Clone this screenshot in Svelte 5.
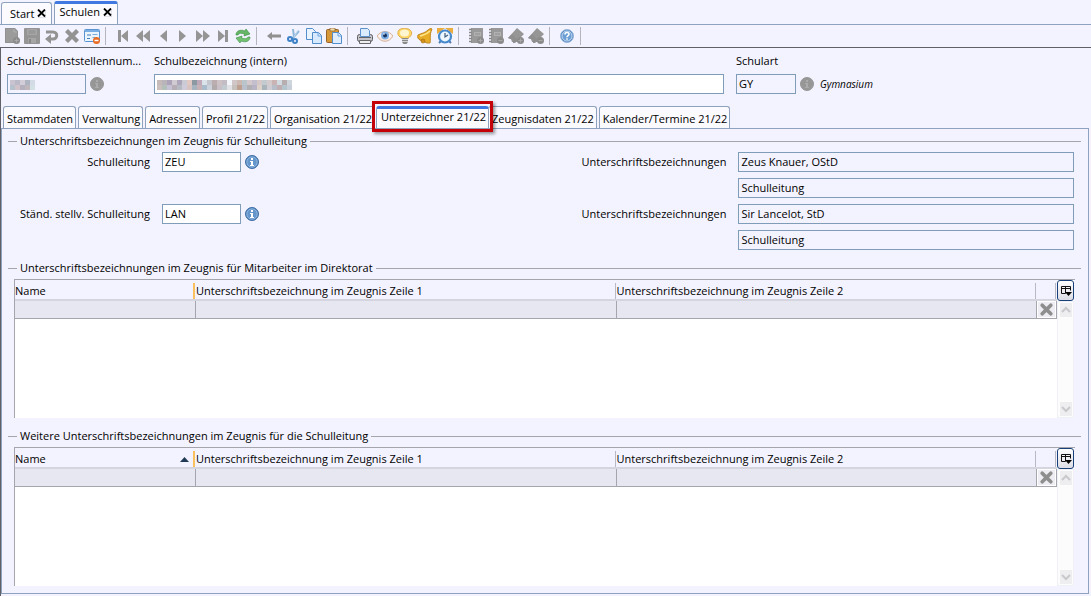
<script lang="ts">
	type Tool = { name: string; off?: boolean };

	const toolbar: Tool[][] = [
		[
			{ name: 'Neu', off: true },
			{ name: 'Speichern', off: true },
			{ name: 'Rückgängig', off: true },
			{ name: 'Löschen', off: true },
			{ name: 'Maske leeren' }
		],
		[
			{ name: 'Erster', off: true },
			{ name: 'Seite zurück', off: true },
			{ name: 'Zurück', off: true },
			{ name: 'Weiter', off: true },
			{ name: 'Seite weiter', off: true },
			{ name: 'Letzter', off: true },
			{ name: 'Aktualisieren' }
		],
		[
			{ name: 'Vorheriges', off: true },
			{ name: 'Ausschneiden' },
			{ name: 'Kopieren' },
			{ name: 'Einfügen' }
		],
		[
			{ name: 'Drucken' },
			{ name: 'Ansicht' },
			{ name: 'Hinweis' },
			{ name: 'Benachrichtigung' },
			{ name: 'Wiedervorlage' }
		],
		[
			{ name: 'Liste hinzufügen', off: true },
			{ name: 'Liste entfernen', off: true },
			{ name: 'Marke hinzufügen', off: true },
			{ name: 'Marke entfernen', off: true }
		],
		[{ name: 'Hilfe' }]
	];

	const plus = '<circle cx="12.5" cy="12.5" r="3.5" fill="#8b8b8b"/><path d="M10.5 12.5h4M12.5 10.5v4" stroke="#aaa"/>';
	const minus = '<circle cx="12.5" cy="12.5" r="3.5" fill="#8b8b8b"/><path d="M10.5 12.5h4" stroke="#aaa"/>';
	const book = '<path d="M3 0h12v15H3z" fill="#999"/><path d="M1 1.5h3M1 4.5h3M1 7.5h3M1 10.5h3M1 13.5h3" stroke="#888" stroke-width="1.5"/><path d="M6 4h7v4H6z" fill="#b0b0b0"/><path d="M7 6h5" stroke="#909090"/>';
	const tag = '<path d="M9 0l7 6-3 3v5H4l-1-3-3-1z" fill="#969696"/><path d="M0 10l4-4 6 6-3 3H5v-3z" fill="#8f8f8f"/>';

	const icons: Record<string, string> = {
		'Neu': '<path d="M1 0h10l3 3v12H1z" fill="#9b9b9b"/><path d="M1.5.5h9l3 3v11h-12z" fill="none" stroke="#919191"/><path d="M10 1v3h3" fill="none" stroke="#b0b0b0"/>' + plus,
		'Speichern': '<rect width="16" height="16" rx="1" fill="#959595"/><path d="M3 1h10v6H3z" fill="#a6a6a6"/><path d="M4.5 3h7M4.5 5h7" stroke="#8c8c8c"/><path d="M4 10h8v5H4z" fill="#a6a6a6"/><path d="M5 11h2v4H5z" fill="#888"/>',
		'Rückgängig': '<path d="M2 4h7c5 0 5 7 0 7H6" fill="none" stroke="#939393" stroke-width="3"/><path d="M7 6v10l-6-5z" fill="#939393"/>',
		'Löschen': '<path d="M1 4l3-3 4 4 4-4 3 3-4 4 4 4-3 3-4-4-4 4-3-3 4-4z" fill="#929292"/>',
		'Maske leeren': '<rect x=".5" y="1.5" width="15" height="12" rx="1" fill="#eaf4ff" stroke="#5a94d0"/><path d="M1 2h14v2H1z" fill="#78aee4"/><path d="M3 7h4M3 10.5h3" stroke="#417fbd"/><path d="M8.5 6.5h5M8.5 9.5h3" stroke="#7aabda"/><circle cx="12.5" cy="12.5" r="3.5" fill="#e96b22"/><path d="M10.5 12.5h4" stroke="#fff" stroke-width="1.5"/>',
		'Erster': '<path d="M3 2h3v12H3zM13 2v12L6 8z" fill="#959595"/>',
		'Seite zurück': '<path d="M8 2v12L1 8zM15 2v12L8 8z" fill="#959595"/>',
		'Zurück': '<path d="M12 2v12L5 8z" fill="#959595"/>',
		'Weiter': '<path d="M4 2v12l7-6z" fill="#959595"/>',
		'Seite weiter': '<path d="M1 2v12l7-6zM8 2v12l7-6z" fill="#959595"/>',
		'Letzter': '<path d="M3 2v12l7-6zM10 2h3v12h-3z" fill="#959595"/>',
		'Aktualisieren': '<path d="M1 7c0-4 4-6 9-4l1-2 4 5-6 2 .5-2C6 5 4 5 3 7z" fill="#65b665" stroke="#398b42" stroke-width=".6"/><path d="M15 9c0 4-4 6-9 4l-1 2-4-5 6-2-.5 2c3.5 1 5.5 1 6.5-1z" fill="#72c272" stroke="#398b42" stroke-width=".6"/>',
		'Vorheriges': '<path d="M1 8l5-4v2.5h9v3H6V12z" fill="#909090"/>',
		'Ausschneiden': '<path d="M7 1l1 8M13 3L6 11" stroke="#8db6da" stroke-width="2" fill="none"/><path d="M12 2L8 9" stroke="#c8dbed"/><circle cx="4" cy="11" r="2" fill="none" stroke="#3d82c8" stroke-width="2"/><circle cx="9" cy="13" r="2" fill="none" stroke="#3d82c8" stroke-width="2"/>',
		'Kopieren': '<path d="M.5.5h6l3 3v8h-9z" fill="#eaf4ff" stroke="#528dcc"/><path d="M6.5 4.5h6l3 3v8h-9z" fill="#d8eaff" stroke="#528dcc"/><path d="M12 5v3h3" fill="none" stroke="#6ba3df"/>',
		'Einfügen': '<rect x=".5" y="1.5" width="12" height="13" rx="1" fill="#d79839" stroke="#976328"/><path d="M4 0h5v3H4z" fill="#f0dcaa" stroke="#8b602b" stroke-width=".7"/><path d="M6.5 4.5h6l3 3v8h-9z" fill="#dfedff" stroke="#528dcc"/><path d="M12 5v3h3" fill="none" stroke="#6ba3df"/>',
		'Drucken': '<rect x=".5" y="6.5" width="15" height="7" rx="2" fill="#c6c6ca" stroke="#5d5d63"/><path d="M3.5.5h7l2 2v6h-9z" fill="#dcecff" stroke="#5c91cd"/><path d="M2 9.5h12" stroke="#666"/><path d="M2.5 12.5h11v3h-11z" fill="#eee" stroke="#66666c"/>',
		'Ansicht': '<path d="M0 8c4-6 12-6 16 0-4 7-12 7-16 0z" fill="#fbe9de" stroke="#d4b39e"/><path d="M2 8c3-4 9-4 12 0-3 4-9 4-12 0z" fill="#fff"/><circle cx="8" cy="7.5" r="4" fill="#7faee4"/><circle cx="8" cy="7.5" r="2" fill="#17325e"/><circle cx="7" cy="6" r=".8" fill="#fff"/>',
		'Hinweis': '<path d="M5 10C-1 8 0 1 5 .7h5c6 1 6 7 1 9.300v1H5z" fill="#ffd768" stroke="#e2ab45"/><ellipse cx="7.5" cy="5" rx="4.500" ry="3.500" fill="#fff6cf"/><path d="M5 10h6v4l-1.500 2h-3L5 14z" fill="#898989"/><path d="M5 11.500h6M5 13.500h6" stroke="#d3d3d3"/>',
		'Benachrichtigung': '<path d="M15 1c-1-1-3 0-4 1-3 3-6 3-10 5-1 2 0 4 2 5l7 3h3c1-3-1-8 2-14z" fill="#e8ad28" stroke="#c08620"/><path d="M13 3C9 7 6 7 3 8" stroke="#ffe58c" fill="none" stroke-width="1.5"/><circle cx="6" cy="13" r="2" fill="#d4901a" stroke="#a06b10" stroke-width=".6"/>',
		'Wiedervorlage': '<path d="M1 4V1h4zM15 4V1h-4z" fill="#f2c75c" stroke="#e9ac3d" stroke-width="2"/><path d="M4 13l-2 2M12 13l2 2" stroke="#4e7aad" stroke-width="2"/><circle cx="8" cy="8.5" r="6" fill="#eef6ff" stroke="#4689cd" stroke-width="2.2"/><path d="M8 5v4l3-2" fill="none" stroke="#405c79" stroke-width="1.2"/>',
		'Liste hinzufügen': book + plus,
		'Liste entfernen': book + minus,
		'Marke hinzufügen': tag + plus,
		'Marke entfernen': tag + minus
	};

	const tabs = [
		'Stammdaten',
		'Verwaltung',
		'Adressen',
		'Profil 21/22',
		'Organisation 21/22',
		'Unterzeichner 21/22',
		'Zeugnisdaten 21/22',
		'Kalender/Termine 21/22'
	];
	let active = $state('Unterzeichner 21/22');

	const signers = [
		{ id: 'leitung', label: 'Schulleitung', code: 'ZEU', line1: 'Zeus Knauer, OStD', line2: 'Schulleitung' },
		{ id: 'stellv', label: 'Ständ. stellv. Schulleitung', code: 'LAN', line1: 'Sir Lancelot, StD', line2: 'Schulleitung' }
	];

	const lists = [
		{ title: 'Unterschriftsbezeichnungen im Zeugnis für Mitarbeiter im Direktorat', sorted: false },
		{ title: 'Weitere Unterschriftsbezeichnungen im Zeugnis für die Schulleitung', sorted: true }
	];

	// colours of the masked values, two rows each
	const maskShort = ['#c9c3cf #b9b9c8 #d2cdd6 #aeb4c2 #d4dbe6', '#b5c1cc #d0c2c8 #b4b0bd #bfb7bb #d3e0e4'];
	const maskLong = [
		'#c6b9b9 #b9b4b9 #aca3b9 #cfcbd0 #aea6ba #cbcbd6 #e0c8c4 #8c99a3 #bda9b9 #dce2ea #c4c6ce #bcaeb0 #cdc3c6 #c3bcc4 #f2f6fb #d0c6c8 #cdb9b3 #bac5cb #d4c9cc #c4bfcc #d6c8c8 #c3cad0 #d4cbcd #c9b3b3 #d2dae2 #b8aeb0 #cfd5dc',
		'#cabfbc #b3c0b9 #c6c1d4 #b6adb5 #b5bac3 #cfcbdb #d7c3c0 #a6b3c0 #c6b2b5 #a9bccb #cbd2dc #b3aaab #c8c0c6 #c2ccd0 #e2e2e6 #c6c1bd #bda08f #b9c0cb #b1b0b3 #b8b4c5 #ddd2ca #a9b4bb #d0ccd4 #b8bec9 #c1aeb0 #b5c5ce #c9cfd8'
	];
</script>

{#snippet info(off: boolean)}
	<svg class="info" viewBox="0 0 14 14" aria-hidden="true">
		<circle cx="7" cy="7" r="6.5" fill={off ? '#969696' : '#4c83bd'} stroke={off ? '#969696' : '#3f6ea6'} />
		<circle cx="7" cy="7" r="5.2" fill={off ? '#969696' : '#6496cb'} stroke={off ? '#9b9b9b' : '#a9c7e6'} stroke-width=".7" />
		<path d="M6 3h2v2H6zM5 6h3v4h1v1H5v-1h1V7H5z" fill={off ? '#ababab' : '#fff'} />
	</svg>
{/snippet}

{#snippet mask(rows: string[])}
	<svg class="mask" width={rows[0].split(' ').length * 5} height="10" aria-hidden="true">
		{#each rows as row, y}
			{#each row.split(' ') as fill, x}
				<rect x={x * 5} y={y * 5} width="5" height="5" {fill} />
			{/each}
		{/each}
	</svg>
{/snippet}

{#snippet closer()}
	<svg class="closer" viewBox="0 0 9 9" aria-hidden="true">
		<path d="M1 9h8V2" fill="none" stroke="#cdcdd8" />
		<path d="M1 .5L8 7.5M8 .5L1 7.5" stroke="#000" stroke-width="1.8" />
	</svg>
{/snippet}

<nav class="windows">
	<button>Start {@render closer()}</button>
	<button class="current">Schulen {@render closer()}</button>
</nav>

<div class="toolbar">
	{#each toolbar as group}
		<div class="group">
			{#each group as tool}
				<button disabled={tool.off} title={tool.name} aria-label={tool.name}>
					<svg viewBox="0 0 16 16">
						{#if tool.name === 'Hilfe'}
							<circle cx="8" cy="8" r="6.5" fill="#4e86c5" stroke="#98b6d8" />
							<circle cx="8" cy="8" r="5" fill="#6b9ed4" stroke="#dce9f7" stroke-width=".8" />
							<path d="M6 6.5c0-2.5 4-2.5 4-.3 0 1.500-2 1.300-2 3M8 10.300v1.500" fill="none" stroke="#fff" stroke-width="1.5" />
						{:else}
							{@html icons[tool.name]}
						{/if}
					</svg>
				</button>
			{/each}
		</div>
	{/each}
</div>

<main>
	<div class="head">
		<div class="field number">
			<label for="nummer">Schul-/Dienststellennum...</label>
			<div class="line">
				<div class="masked">
					<input id="nummer" class="short" readonly />
					{@render mask(maskShort)}
				</div>
				{@render info(true)}
			</div>
		</div>
		<div class="field title">
			<label for="bezeichnung">Schulbezeichnung (intern)</label>
			<div class="masked">
				<input id="bezeichnung" />
				{@render mask(maskLong)}
			</div>
		</div>
		<div class="field kind">
			<label for="schulart">Schulart</label>
			<div class="line">
				<input id="schulart" class="code" value="GY" readonly />
				{@render info(true)}
				<em>Gymnasium</em>
			</div>
		</div>
	</div>

	<div class="tabs" role="tablist">
		{#each tabs as tab}
			<button role="tab" aria-selected={tab === active} class:active={tab === active} onclick={() => (active = tab)}>
				{tab}
				{#if tab === active}<span class="marker"></span>{/if}
			</button>
		{/each}
	</div>

	<div class="panel" role="tabpanel">
		<fieldset>
			<legend>Unterschriftsbezeichnungen im Zeugnis für Schulleitung</legend>
			<div class="signers">
				{#each signers as s}
					<label for={s.id}>{s.label}</label>
					<input id={s.id} value={s.code} />
					{@render info(false)}
					<label for="{s.id}-1">Unterschriftsbezeichnungen</label>
					<input id="{s.id}-1" value={s.line1} readonly />
					<input id="{s.id}-2" class="second" value={s.line2} aria-label="Unterschriftsbezeichnungen Zeile 2" readonly />
				{/each}
			</div>
		</fieldset>

		{#each lists as list}
			<fieldset>
				<legend>{list.title}</legend>
				<div class="list">
					<table>
						<thead>
							<tr>
								<th class="name">
									<div class="cell mark">
										Name
										{#if list.sorted}
											<svg class="sort" viewBox="0 0 9 5"><path d="M0 5l4.5-5L9 5z" fill="#1f3a55" /></svg>
										{/if}
									</div>
								</th>
								<th><div class="cell">Unterschriftsbezeichnung im Zeugnis Zeile 1</div></th>
								<th><div class="cell">Unterschriftsbezeichnung im Zeugnis Zeile 2</div></th>
								<th class="last"><div class="cell"></div></th>
							</tr>
						</thead>
						<tbody>
							<tr>
								<td></td>
								<td></td>
								<td></td>
								<td>
									<button class="clear" aria-label="Filter löschen">
										<svg viewBox="0 0 14 14"><path d="M3 3l8 8M11 3l-8 8" stroke="#8e8e8e" stroke-width="3.5" stroke-linecap="round" /></svg>
									</button>
								</td>
							</tr>
						</tbody>
					</table>
					<div class="side">
						<button class="columns" aria-label="Spalten wählen">
							<svg viewBox="0 0 12 12">
								<path d="M1.5 8.5v-7h9v4M1.5 3.5h9M5.5 1.5v7M1.5 8.5h4" fill="none" stroke="#111" />
								<path d="M5 7h7l-3.5 4z" fill="#000" />
							</svg>
						</button>
						<div class="scroll">
							<button aria-label="Nach oben"><svg viewBox="0 0 12 14"><path d="M2 9l4-4 4 4" /></svg></button>
							<button aria-label="Nach unten"><svg viewBox="0 0 12 14"><path d="M2 5l4 4 4-4" /></svg></button>
						</div>
					</div>
				</div>
			</fieldset>
		{/each}
	</div>
</main>

<style>
	:global(body) {
		margin: 0;
		background: #f3f3ff;
		color: #000;
		font: 11px/16px 'Open Sans', 'Noto Sans', sans-serif;
	}
	:global(*) {
		box-sizing: border-box;
	}
	button,
	input {
		font: inherit;
		color: inherit;
		margin: 0;
	}
	button {
		padding: 0;
		border: 0;
		background: none;
	}
	svg {
		display: block;
		flex: none;
	}

	.windows {
		display: flex;
		align-items: flex-end;
		gap: 2px;
		height: 25px;
		padding-left: 1px;
		border-bottom: 1px solid #8fa2bd;
	}
	.windows button {
		display: flex;
		align-items: center;
		gap: 3px;
		height: 22px;
		padding: 0 5px 0 8px;
		border: 1px solid #8fa2bd;
		border-bottom: 0;
		border-radius: 3px 3px 0 0;
		background: #fafaff;
	}
	.windows .current {
		height: 23px;
		padding: 0 5px 4px 4px;
		border-top: 3px solid #3f78e0;
	}
	.closer {
		width: 9px;
		height: 9px;
	}

	.toolbar {
		display: flex;
		align-items: center;
		height: 23px;
		padding-left: 2px;
		border-bottom: 1px solid #606068;
	}
	.group {
		display: flex;
		align-items: center;
	}
	.group::after {
		content: '';
		width: 1px;
		height: 18px;
		margin: 0 7px 0 3px;
		background: #b5b5bd;
	}
	.group button {
		display: flex;
		align-items: center;
		justify-content: center;
		width: 20px;
		height: 20px;
	}
	.group svg {
		width: 16px;
		height: 16px;
	}

	main {
		padding: 5px 2px 2px 0;
		border-left: 1px solid #606068;
	}
	input {
		display: block;
		width: 100%;
		height: 20px;
		padding: 0 2px 2px;
		border: 1px solid #7f9db9;
		border-radius: 0;
		background: #fff;
		outline: 0;
	}
	input:read-only {
		background: transparent;
	}
	.info {
		width: 14px;
		height: 14px;
	}

	.head {
		display: flex;
		padding-left: 6px;
	}
	.field label {
		display: block;
		margin-bottom: 5px;
		white-space: nowrap;
	}
	.number {
		width: 147px;
	}
	.title {
		flex: 1;
	}
	.kind {
		width: 353px;
		margin-left: 12px;
	}
	.line {
		display: flex;
		align-items: center;
		gap: 4px;
	}
	.short {
		width: 79px;
	}
	.code {
		width: 60px;
	}
	em {
		margin-left: 2px;
		font-size: 10px;
	}
	.masked {
		position: relative;
	}
	.mask {
		position: absolute;
		left: 3px;
		top: 6px;
	}

	.tabs {
		display: flex;
		align-items: flex-end;
		gap: 2px;
		margin-top: 12px;
		padding-left: 2px;
	}
	.tabs button {
		position: relative;
		height: 22px;
		padding: 3px 2px 0 3px;
		border: 1px solid #8fa2bd;
		border-bottom: 0;
		border-radius: 3px 3px 0 0;
		background: #fafaff;
		white-space: nowrap;
	}
	.tabs .active {
		z-index: 1;
		margin: 0 -3px 0 -1px;
		padding: 0 2px 4px 4px;
		border-top: 3px solid #3f78e0;
	}
	.marker {
		position: absolute;
		inset: -8px -5px -4px -5px;
		border: 3px solid #c40008;
		box-shadow: 2px 2px 3px #0006;
	}

	.panel {
		padding: 4px 7px 7px 6px;
		border: 1px solid #8fa2bd;
	}
	fieldset {
		min-width: 0;
		margin: 0;
		padding: 3px 6px 10px;
		border: 0;
		border-top: 1px solid #a5a5ad;
	}
	fieldset:last-child {
		padding-bottom: 0;
	}
	legend {
		margin-left: 3px;
		padding: 0 3px;
	}

	.signers {
		display: grid;
		grid-template-columns: 136px 79px 14px 4fr 3fr;
		column-gap: 12px;
		row-gap: 6px;
		align-items: center;
		padding-right: 1px;
	}
	.signers label {
		text-align: right;
		white-space: nowrap;
	}
	.signers .info {
		margin-left: -8px;
	}
	.second {
		grid-column: 5;
	}

	.list {
		display: flex;
		align-items: flex-start;
		height: 139px;
		border-top: 1px solid #a5a5ad;
		border-left: 1px solid #a5a5ad;
		background: #fff;
	}
	table {
		flex: 1;
		width: 0;
		table-layout: fixed;
		border-collapse: separate;
		border-spacing: 0;
	}
	th,
	td {
		padding: 0;
		font-weight: normal;
		text-align: left;
	}
	th {
		height: 21px;
		border-bottom: 2px solid #d5d5df;
		background: #f3f3ff;
		vertical-align: bottom;
	}
	.name {
		width: 181px;
	}
	.last {
		width: 20px;
	}
	.cell {
		display: flex;
		align-items: center;
		justify-content: space-between;
		height: 16px;
		margin-right: 1px;
		border-right: 1px solid #b9b9c3;
		white-space: nowrap;
	}
	.mark {
		border-right: 2px solid #fcc15d;
	}
	.sort {
		width: 9px;
		height: 5px;
		margin-right: 4px;
	}
	td {
		height: 18px;
		border-right: 1px solid #a5a5ad;
		border-bottom: 1px solid #a5a5ad;
		background: #e7e7f1;
	}
	.clear {
		display: flex;
		align-items: center;
		justify-content: center;
		width: 100%;
		height: 17px;
		border: 1px solid #fff;
		background: #ededf3;
	}
	.clear svg {
		width: 15px;
		height: 15px;
	}
	.side {
		display: flex;
		flex-direction: column;
		width: 18px;
		height: 100%;
		border-right: 1px solid #f3f3ff;
	}
	.columns {
		display: flex;
		align-items: center;
		justify-content: center;
		height: 21px;
		border: 1px solid #173f78;
		border-radius: 3px;
		background: linear-gradient(#fff, #dcdce6);
	}
	.columns svg {
		width: 12px;
		height: 12px;
	}
	.scroll {
		display: flex;
		flex: 1;
		flex-direction: column;
		align-items: center;
		justify-content: space-between;
		padding: 1px 0;
		border: 1px solid #f0f0f8;
		background: #fcfcfc;
	}
	.scroll button {
		background: #eeeef0;
	}
	.scroll svg {
		width: 12px;
		height: 14px;
		fill: none;
		stroke: #c9c9cd;
		stroke-width: 2;
	}
</style>
